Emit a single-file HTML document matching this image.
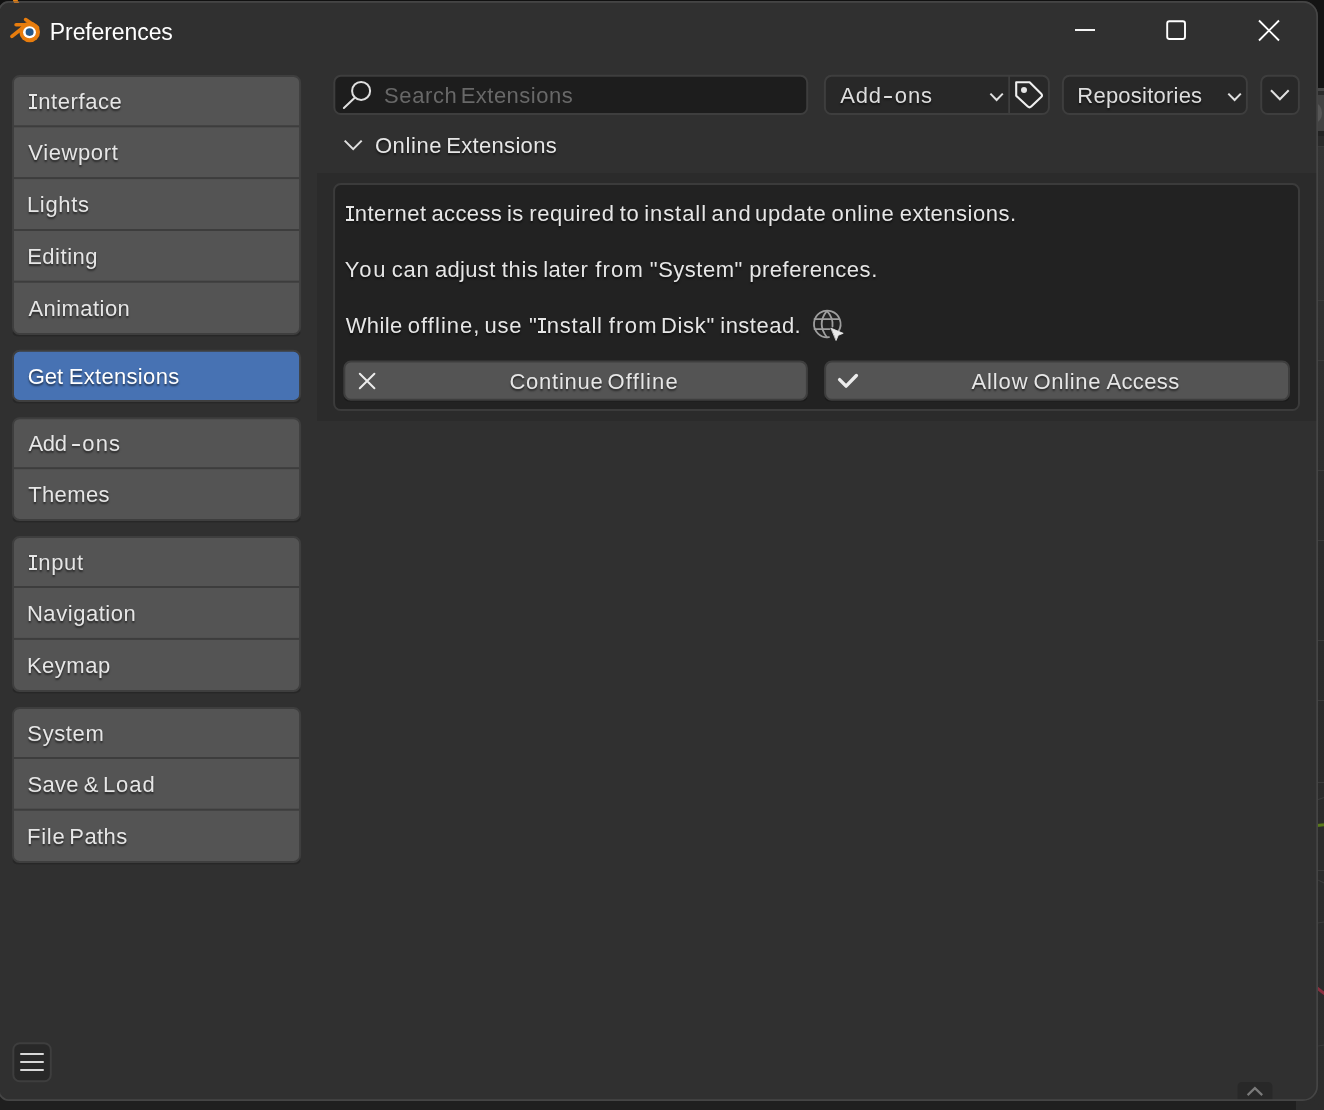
<!DOCTYPE html>
<html><head><meta charset="utf-8"><title>Preferences</title>
<style>
html,body{margin:0;padding:0;}
body{width:1324px;height:1110px;overflow:hidden;background:#232323;position:relative;font-family:"Liberation Sans",sans-serif;}
.abs{position:absolute;}
#bgtop{position:absolute;left:0;top:0;width:1324px;height:60px;background:#111111;}
#bgright{position:absolute;left:1296px;top:0;width:28px;height:1110px;background:linear-gradient(#343434 0px,#343434 145px,#2e2e2e 400px,#2a2a2a 600px,#2c2c2c 1110px);}
#bgbot{position:absolute;left:0;top:1090px;width:1324px;height:20px;background:#1f1f1f;}
#win{position:absolute;left:-4px;top:1px;width:1320px;height:1098.5px;border:1.5px solid #444444;border-radius:13px;background:#303030;overflow:hidden;}
#panel{position:absolute;left:317px;top:173px;width:1001px;height:248px;background:#2a2a2a;}
#box{position:absolute;left:333.5px;top:183.5px;width:964px;height:225px;border:1.5px solid #3a3a3a;border-radius:6px;background:#222222;}
.grp{position:absolute;left:12.5px;width:285.5px;border:1.5px solid #3d3d3d;border-radius:6px;background:#545454;box-sizing:content-box;overflow:hidden;box-shadow:0 1px 1px rgba(0,0,0,0.18);}
.grp.sel{background:#4772b3;}
.sep{position:absolute;left:0;width:100%;height:2px;background:#3d3d3d;display:block;}
.t{position:absolute;white-space:pre;line-height:1;}
#texts{position:absolute;left:0;top:0;width:1324px;height:1110px;will-change:transform;}
.mi{display:inline-block;position:relative;width:8px;height:15px;vertical-align:baseline;border-top:2px solid;border-bottom:2px solid;box-sizing:border-box;margin:0 1.2px 0 0;font-size:0;letter-spacing:0;}
.mi::before{content:"";position:absolute;left:3px;width:2px;top:0;bottom:0;background:currentColor;}
.sh .mi{filter:drop-shadow(0 1.5px 1px rgba(0,0,0,0.5));}
.sh{text-shadow:0 1.5px 2px rgba(0,0,0,0.55);}
.hy{box-shadow:0 1.5px 2px rgba(0,0,0,0.5);border-radius:0.5px}
.w{position:absolute;box-sizing:border-box;border:1.5px solid #3d3d3d;border-radius:6px;}
.btn{background:#545454;box-shadow:0 1px 1px rgba(0,0,0,0.2);}
.menu{background:#282828;}
svg{position:absolute;overflow:visible;}
</style></head><body>
<div id="bgtop"></div>
<div id="bgbot"></div>
<div id="bgright">
  <div class="abs" style="left:0;top:0;width:28px;height:88px;background:#141414"></div>
  <div class="abs" style="left:0;top:88px;width:28px;height:2.5px;background:#484848"></div>
  <div class="abs" style="left:0;top:90.5px;width:28px;height:4.5px;background:#2a2a2a"></div>
  <div class="abs" style="left:0;top:95px;width:28px;height:36px;background:#424242"></div>
  <div class="abs" style="left:12px;top:103px;width:14px;height:20px;border-radius:50%;background:#565656"></div>
  <div class="abs" style="left:0;top:131px;width:28px;height:4.5px;background:#222222"></div>
  <div class="abs" style="left:0;top:135.5px;width:28px;height:10px;background:#2a2a2a"></div>
  <div class="abs" style="left:0;top:145.5px;width:28px;height:1px;background:#3a3a3a"></div>
  <div class="abs" style="left:20px;top:782px;width:10px;height:1px;background:#3b3b3b;transform:rotate(0deg)"></div>
  <div class="abs" style="left:20px;top:798px;width:10px;height:1px;background:#3b3b3b;transform:rotate(-20deg)"></div>
  <div class="abs" style="left:20px;top:870px;width:10px;height:1px;background:#3b3b3b;transform:rotate(0deg)"></div>
  <div class="abs" style="left:20px;top:881px;width:10px;height:1px;background:#3b3b3b;transform:rotate(25deg)"></div>
  <div class="abs" style="left:20px;top:922px;width:10px;height:1px;background:#3b3b3b;transform:rotate(-8deg)"></div>
  <div class="abs" style="left:20px;top:1045px;width:10px;height:1px;background:#3b3b3b;transform:rotate(-10deg)"></div>
  <div class="abs" style="left:20px;top:300px;width:10px;height:1px;background:#3b3b3b;transform:rotate(0deg)"></div>
  <div class="abs" style="left:20px;top:360px;width:10px;height:1px;background:#3b3b3b;transform:rotate(0deg)"></div>
  <div class="abs" style="left:20px;top:470px;width:10px;height:1px;background:#3b3b3b;transform:rotate(0deg)"></div>
  <div class="abs" style="left:20px;top:540px;width:10px;height:1px;background:#3b3b3b;transform:rotate(0deg)"></div>
  <div class="abs" style="left:20px;top:640px;width:10px;height:1px;background:#3b3b3b;transform:rotate(0deg)"></div>
  <div class="abs" style="left:20px;top:700px;width:10px;height:1px;background:#3b3b3b;transform:rotate(0deg)"></div>
  <div class="abs" style="left:14px;top:824px;width:14px;height:2.5px;background:#5a7a1a;transform:rotate(-6deg)"></div>
  <div class="abs" style="left:16px;top:988px;width:14px;height:3px;background:#8a2f3f;transform:rotate(38deg)"></div>
</div>
<svg width="1324" height="1110" style="left:0;top:0" viewBox="0 0 1324 1110">
<path d="M9 1 H1303 A15 15 0 0 1 1318 16 V1086 A15 15 0 0 1 1303 1101 H9 A11 11 0 0 1 -2 1090 V12 A11 11 0 0 1 9 1 Z" fill="#303030"/>
</svg>
<svg width="1324" height="1110" style="left:0;top:0" viewBox="0 0 1324 1110">
<rect x="12.6" y="329.10" width="287.9" height="7.5" rx="6" fill="#000" opacity="0.17"/>
<rect x="13.00" y="75.90" width="287.10" height="258.20" rx="6.6" fill="#545454" stroke="#3e3e3e" stroke-width="2.0" />
<rect x="14" y="125.30" width="285.1" height="2" fill="#3d3d3d"/>
<rect x="14" y="177.10" width="285.1" height="2" fill="#3d3d3d"/>
<rect x="14" y="229.00" width="285.1" height="2" fill="#3d3d3d"/>
<rect x="14" y="280.70" width="285.1" height="2" fill="#3d3d3d"/>
<rect x="12.6" y="396.00" width="287.9" height="7.5" rx="6" fill="#000" opacity="0.17"/>
<rect x="13.00" y="350.80" width="287.10" height="50.20" rx="6.6" fill="#4772b3" stroke="#3e3e3e" stroke-width="2.0" />
<rect x="12.6" y="515.00" width="287.9" height="7.5" rx="6" fill="#000" opacity="0.17"/>
<rect x="13.00" y="418.20" width="287.10" height="101.80" rx="6.6" fill="#545454" stroke="#3e3e3e" stroke-width="2.0" />
<rect x="14" y="467.20" width="285.1" height="2" fill="#3d3d3d"/>
<rect x="12.6" y="685.90" width="287.9" height="7.5" rx="6" fill="#000" opacity="0.17"/>
<rect x="13.00" y="537.00" width="287.10" height="153.90" rx="6.6" fill="#545454" stroke="#3e3e3e" stroke-width="2.0" />
<rect x="14" y="586.00" width="285.1" height="2" fill="#3d3d3d"/>
<rect x="14" y="637.90" width="285.1" height="2" fill="#3d3d3d"/>
<rect x="12.6" y="857.00" width="287.9" height="7.5" rx="6" fill="#000" opacity="0.17"/>
<rect x="13.00" y="707.90" width="287.10" height="154.10" rx="6.6" fill="#545454" stroke="#3e3e3e" stroke-width="2.0" />
<rect x="14" y="757.00" width="285.1" height="2" fill="#3d3d3d"/>
<rect x="14" y="808.70" width="285.1" height="2" fill="#3d3d3d"/>
<rect x="317.00" y="173.00" width="1000.00" height="248.00" rx="0" fill="#2b2b2b" stroke="none" stroke-width="0" />
<rect x="334.10" y="184.00" width="964.90" height="226.10" rx="6.6" fill="#222222" stroke="#3b3b3b" stroke-width="2.0" />
<rect x="334.30" y="75.80" width="472.90" height="38.30" rx="6.6" fill="#1d1d1d" stroke="#3e3e3e" stroke-width="2.0" />
<rect x="824.90" y="75.80" width="224.00" height="38.30" rx="6.6" fill="#282828" stroke="#3e3e3e" stroke-width="2.0" />
<rect x="1008.2" y="76" width="1.8" height="38" fill="#3e3e3e"/>
<rect x="1062.90" y="75.80" width="184.00" height="38.30" rx="6.6" fill="#282828" stroke="#3e3e3e" stroke-width="2.0" />
<rect x="1261.20" y="75.80" width="37.70" height="38.30" rx="6.6" fill="#282828" stroke="#3e3e3e" stroke-width="2.0" />
<rect x="344.3" y="395" width="462.6" height="6.6" rx="6" fill="#000" opacity="0.22"/>
<rect x="825.1" y="395" width="463.9" height="6.6" rx="6" fill="#000" opacity="0.22"/>
<rect x="344.30" y="361.60" width="462.60" height="38.20" rx="6.6" fill="#545454" stroke="#3e3e3e" stroke-width="2.0" />
<rect x="825.10" y="361.60" width="463.90" height="38.20" rx="6.6" fill="#545454" stroke="#3e3e3e" stroke-width="2.0" />
<rect x="13.30" y="1043.20" width="37.50" height="38.10" rx="6.6" fill="#282828" stroke="#3e3e3e" stroke-width="2.0" />
<path d="M1237.5 1100 V1087 Q1237.5 1082 1242.5 1082 H1267.5 Q1272.5 1082 1272.5 1087 V1100 Z" fill="#282828"/>
</svg>
<!-- hyphens -->
<div class="abs hy" style="left:72.2px;top:444.1px;width:8.3px;height:2.1px;background:#e6e6e6"></div>
<div class="abs hy" style="left:884.2px;top:95.8px;width:8.3px;height:2.1px;background:#dddddd"></div>
<!-- hamburger -->
<div class="abs" style="left:20px;top:1053px;width:24px;height:2px;background:#d8d8d8;border-radius:1px"></div>
<div class="abs" style="left:20px;top:1061px;width:24px;height:2px;background:#d8d8d8;border-radius:1px"></div>
<div class="abs" style="left:20px;top:1069px;width:24px;height:2px;background:#d8d8d8;border-radius:1px"></div>
<!-- bottom tab -->
<svg width="1324" height="1110" style="left:0;top:0" viewBox="0 0 1324 1110" fill="none" stroke-linecap="round" stroke-linejoin="round">
  <!-- blender logo -->
  <g id="logo" transform="translate(0,0.4)">
    <g stroke="#e87d0d" stroke-width="3.6" stroke-linecap="round">
      <path d="M25.6 19.2 L37.5 27.2"/>
      <path d="M16.1 24.4 L29 24.4"/>
      <path d="M11.9 36 L22.5 27.6"/>
    </g>
    <circle cx="29.7" cy="31.6" r="10.3" fill="#e87d0d" stroke="none"/>
    <ellipse cx="29.5" cy="31.9" rx="6.45" ry="5.95" fill="#ffffff" stroke="none"/>
    <ellipse cx="29.6" cy="31.7" rx="4.0" ry="3.85" fill="#265787" stroke="none"/>
  </g>
  <!-- window controls -->
  <g stroke="#ffffff" stroke-width="1.9" stroke-linecap="butt">
    <path d="M1075 30 H1095"/>
    <rect x="1167.2" y="21.2" width="17.8" height="17.8" rx="2.2"/>
    <path d="M1259 20.5 L1279 40.5 M1279 20.5 L1259 40.5"/>
  </g>
  <!-- search icon -->
  <g stroke="#e0e0e0" stroke-width="2">
    <circle cx="361.1" cy="90.9" r="9"/>
    <path d="M354.2 98.2 L343.9 108"/>
  </g>
  <!-- dropdown chevrons -->
  <g stroke="#e0e0e0" stroke-width="2" stroke-linecap="butt" stroke-linejoin="miter">
    <path d="M990.4 93.6 L996.6 100 L1002.8 93.6"/>
    <path d="M1228.3 93.6 L1234.6 100 L1240.8 93.6"/>
    <path d="M1271 90.2 L1279.9 99.3 L1288.7 90.2"/>
    <path d="M344.7 140.6 L353.2 149.2 L361.7 140.6"/>
  </g>
  <!-- tag icon -->
  <g stroke="#f0f0f0" stroke-width="2.1" stroke-linejoin="round">
    <path d="M1016.2 82.2 H1029.6 L1041.2 93.8 Q1042.8 95.4 1041.2 97 L1031.2 106.6 Q1029.5 108.2 1027.8 106.6 L1016.2 95.8 Z"/>
    <circle cx="1024" cy="90" r="3" fill="#e6e6e6" stroke="none"/>
  </g>
  <!-- globe icon -->
  <g stroke="#9e9e9e" stroke-width="1.8">
    <path d="M838.6 331 A13.3 13.3 0 1 0 829 337.2"/>
    <path d="M814.5 319.1 H839.3"/>
    <path d="M814.5 329.1 H829.5"/>
    <path d="M826.9 310.9 Q816.5 324 826.9 337.2"/>
    <path d="M826.9 310.9 Q833.5 318 832.5 326.5"/>
  </g>
  <path d="M831.2 328.3 L843.2 333.3 L838.3 335.3 L836.2 340.2 Z" fill="#eaeaea" stroke="#eaeaea" stroke-width="0.8"/>
  <!-- X icon -->
  <g stroke="#ececec" stroke-width="2">
    <path d="M359.8 373.8 L374.4 388.2 M374.4 373.8 L359.8 388.2"/>
  </g>
  <!-- check icon -->
  <path d="M839.6 379.6 L846.1 386.1 L856.4 375.5" stroke="#ececec" stroke-width="3.4"/>
  <!-- bottom chevron -->
  <path d="M1247.6 1095.1 L1254.9 1088.1 L1262.2 1095.1" stroke="#7a7a7a" stroke-width="2.2" stroke-linecap="butt" stroke-linejoin="miter"/>
</svg>
<div id="texts">
<span id="title" class="t " style="left:49.87px;top:21.13px;font-size:23.0px;color:#ffffff;letter-spacing:-0.105px">Preferences</span>
<span id="s1" class="t sh" style="left:29.09px;top:90.98px;font-size:22.0px;color:#e6e6e6;letter-spacing:0.569px"><b class="mi"></b>nterface</span>
<span id="s2" class="t sh" style="left:28.28px;top:142.48px;font-size:22.0px;color:#e6e6e6;letter-spacing:0.612px">Viewport</span>
<span id="s3" class="t sh" style="left:26.94px;top:194.18px;font-size:22.0px;color:#e6e6e6;letter-spacing:0.675px">Lights</span>
<span id="s4" class="t sh" style="left:27.14px;top:245.98px;font-size:22.0px;color:#e6e6e6;letter-spacing:0.527px">Editing</span>
<span id="s5" class="t sh" style="left:28.39px;top:297.88px;font-size:22.0px;color:#e6e6e6;letter-spacing:0.454px">Animation</span>
<span id="s6_0" class="t sh" style="left:27.81px;top:365.78px;font-size:22.0px;color:#ffffff;letter-spacing:-0.051px">Get</span>
<span id="s6_1" class="t sh" style="left:68.65px;top:365.78px;font-size:22.0px;color:#ffffff;letter-spacing:0.328px">Extensions</span>
<span id="s7a" class="t sh" style="left:28.49px;top:432.98px;font-size:22.0px;color:#e6e6e6;letter-spacing:-0.364px">Add</span>
<span id="s7b" class="t sh" style="left:82.16px;top:432.98px;font-size:22.0px;color:#e6e6e6;letter-spacing:1.245px">ons</span>
<span id="s8" class="t sh" style="left:28.16px;top:484.18px;font-size:22.0px;color:#e6e6e6;letter-spacing:0.396px">Themes</span>
<span id="s9" class="t sh" style="left:29.09px;top:552.08px;font-size:22.0px;color:#e6e6e6;letter-spacing:0.658px"><b class="mi"></b>nput</span>
<span id="s10" class="t sh" style="left:26.94px;top:603.28px;font-size:22.0px;color:#e6e6e6;letter-spacing:0.549px">Navigation</span>
<span id="s11" class="t sh" style="left:26.94px;top:654.88px;font-size:22.0px;color:#e6e6e6;letter-spacing:0.502px">Keymap</span>
<span id="s12" class="t sh" style="left:27.37px;top:722.78px;font-size:22.0px;color:#e6e6e6;letter-spacing:0.601px">System</span>
<span id="s13_0" class="t sh" style="left:27.59px;top:774.08px;font-size:22.0px;color:#e6e6e6;letter-spacing:0.214px">Save</span>
<span id="s13_1" class="t sh" style="left:83.78px;top:774.08px;font-size:22.0px;color:#e6e6e6;letter-spacing:0.000px">&amp;</span>
<span id="s13_2" class="t sh" style="left:102.92px;top:774.08px;font-size:22.0px;color:#e6e6e6;letter-spacing:0.938px">Load</span>
<span id="s14_0" class="t sh" style="left:26.92px;top:825.98px;font-size:22.0px;color:#e6e6e6;letter-spacing:0.785px">File</span>
<span id="s14_1" class="t sh" style="left:69.28px;top:825.98px;font-size:22.0px;color:#e6e6e6;letter-spacing:0.443px">Paths</span>
<span id="search_0" class="t " style="left:384.10px;top:85.18px;font-size:22.0px;color:#686868;letter-spacing:0.585px">Search</span>
<span id="search_1" class="t " style="left:460.64px;top:85.18px;font-size:22.0px;color:#686868;letter-spacing:0.488px">Extensions</span>
<span id="dd1a" class="t sh" style="left:840.19px;top:84.68px;font-size:22.0px;color:#dddddd;letter-spacing:0.881px">Add</span>
<span id="dd1b" class="t sh" style="left:894.68px;top:84.68px;font-size:22.0px;color:#dddddd;letter-spacing:0.974px">ons</span>
<span id="dd2" class="t sh" style="left:1077.31px;top:84.58px;font-size:22.0px;color:#dddddd;letter-spacing:0.229px">Repositories</span>
<span id="ph_0" class="t sh" style="left:374.89px;top:134.68px;font-size:22.0px;color:#e6e6e6;letter-spacing:0.619px">Online</span>
<span id="ph_1" class="t sh" style="left:446.31px;top:134.68px;font-size:22.0px;color:#e6e6e6;letter-spacing:0.310px">Extensions</span>
<span id="l1_0" class="t sh" style="left:345.52px;top:203.08px;font-size:22.0px;color:#e6e6e6;letter-spacing:0.481px"><b class="mi"></b>nternet</span>
<span id="l1_1" class="t sh" style="left:431.47px;top:203.08px;font-size:22.0px;color:#e6e6e6;letter-spacing:0.380px">access</span>
<span id="l1_2" class="t sh" style="left:506.92px;top:203.08px;font-size:22.0px;color:#e6e6e6;letter-spacing:0.496px">is</span>
<span id="l1_3" class="t sh" style="left:529.36px;top:203.08px;font-size:22.0px;color:#e6e6e6;letter-spacing:0.542px">required</span>
<span id="l1_4" class="t sh" style="left:619.63px;top:203.08px;font-size:22.0px;color:#e6e6e6;letter-spacing:0.694px">to</span>
<span id="l1_5" class="t sh" style="left:644.14px;top:203.08px;font-size:22.0px;color:#e6e6e6;letter-spacing:0.943px">install</span>
<span id="l1_6" class="t sh" style="left:711.48px;top:203.08px;font-size:22.0px;color:#e6e6e6;letter-spacing:1.260px">and</span>
<span id="l1_7" class="t sh" style="left:755.01px;top:203.08px;font-size:22.0px;color:#e6e6e6;letter-spacing:0.680px">update</span>
<span id="l1_8" class="t sh" style="left:831.54px;top:203.08px;font-size:22.0px;color:#e6e6e6;letter-spacing:0.682px">online</span>
<span id="l1_9" class="t sh" style="left:899.68px;top:203.08px;font-size:22.0px;color:#e6e6e6;letter-spacing:0.521px">extensions.</span>
<span id="l2_0" class="t sh" style="left:344.83px;top:258.88px;font-size:22.0px;color:#e6e6e6;letter-spacing:1.804px">You</span>
<span id="l2_1" class="t sh" style="left:391.81px;top:258.88px;font-size:22.0px;color:#e6e6e6;letter-spacing:0.732px">can</span>
<span id="l2_2" class="t sh" style="left:434.89px;top:258.88px;font-size:22.0px;color:#e6e6e6;letter-spacing:0.347px">adjust</span>
<span id="l2_3" class="t sh" style="left:501.82px;top:258.88px;font-size:22.0px;color:#e6e6e6;letter-spacing:0.612px">this</span>
<span id="l2_4" class="t sh" style="left:543.27px;top:258.88px;font-size:22.0px;color:#e6e6e6;letter-spacing:0.443px">later</span>
<span id="l2_5" class="t sh" style="left:595.19px;top:258.88px;font-size:22.0px;color:#e6e6e6;letter-spacing:1.204px">from</span>
<span id="l2_6" class="t sh" style="left:649.87px;top:258.88px;font-size:22.0px;color:#e6e6e6;letter-spacing:0.502px">&quot;System&quot;</span>
<span id="l2_7" class="t sh" style="left:749.27px;top:258.88px;font-size:22.0px;color:#e6e6e6;letter-spacing:0.517px">preferences.</span>
<span id="l3_0" class="t sh" style="left:345.64px;top:314.88px;font-size:22.0px;color:#e6e6e6;letter-spacing:0.392px">While</span>
<span id="l3_1" class="t sh" style="left:407.86px;top:314.88px;font-size:22.0px;color:#e6e6e6;letter-spacing:1.023px">offline,</span>
<span id="l3_2" class="t sh" style="left:484.38px;top:314.88px;font-size:22.0px;color:#e6e6e6;letter-spacing:0.827px">use</span>
<span id="l3_3" class="t sh" style="left:529.03px;top:314.88px;font-size:22.0px;color:#e6e6e6;letter-spacing:0.766px">&quot;<b class="mi"></b>nstall</span>
<span id="l3_4" class="t sh" style="left:608.68px;top:314.88px;font-size:22.0px;color:#e6e6e6;letter-spacing:1.272px">from</span>
<span id="l3_5" class="t sh" style="left:660.93px;top:314.88px;font-size:22.0px;color:#e6e6e6;letter-spacing:0.689px">Disk&quot;</span>
<span id="l3_6" class="t sh" style="left:720.27px;top:314.88px;font-size:22.0px;color:#e6e6e6;letter-spacing:0.486px">instead.</span>
<span id="b1_0" class="t sh" style="left:509.47px;top:370.98px;font-size:22.0px;color:#e6e6e6;letter-spacing:0.748px">Continue</span>
<span id="b1_1" class="t sh" style="left:607.47px;top:370.98px;font-size:22.0px;color:#e6e6e6;letter-spacing:1.184px">Offline</span>
<span id="b2_0" class="t sh" style="left:971.38px;top:371.18px;font-size:22.0px;color:#e6e6e6;letter-spacing:0.899px">Allow</span>
<span id="b2_1" class="t sh" style="left:1033.47px;top:371.18px;font-size:22.0px;color:#e6e6e6;letter-spacing:0.688px">Online</span>
<span id="b2_2" class="t sh" style="left:1106.38px;top:371.18px;font-size:22.0px;color:#e6e6e6;letter-spacing:0.385px">Access</span>
</div>
<svg width="1324" height="1110" style="left:0;top:0" viewBox="0 0 1324 1110">
<path d="M9.0 1.85 H1303.0 A14.15 14.15 0 0 1 1317.15 16.0 V1086.0 A14.15 14.15 0 0 1 1303.0 1100.15 H9.0 A10.15 10.15 0 0 1 -1.15 1090.0 V12.0 A10.15 10.15 0 0 1 9.0 1.85 Z" fill="none" stroke="#454545" stroke-width="1.7"/>
<path d="M13 0 H17.6 L18.2 1.3 H13.2 Z" fill="#e8820f"/><path d="M13.2 1.3 H18.2 L19.4 3 H14.2 Z" fill="#b9722a"/>
</svg>
</body></html>
